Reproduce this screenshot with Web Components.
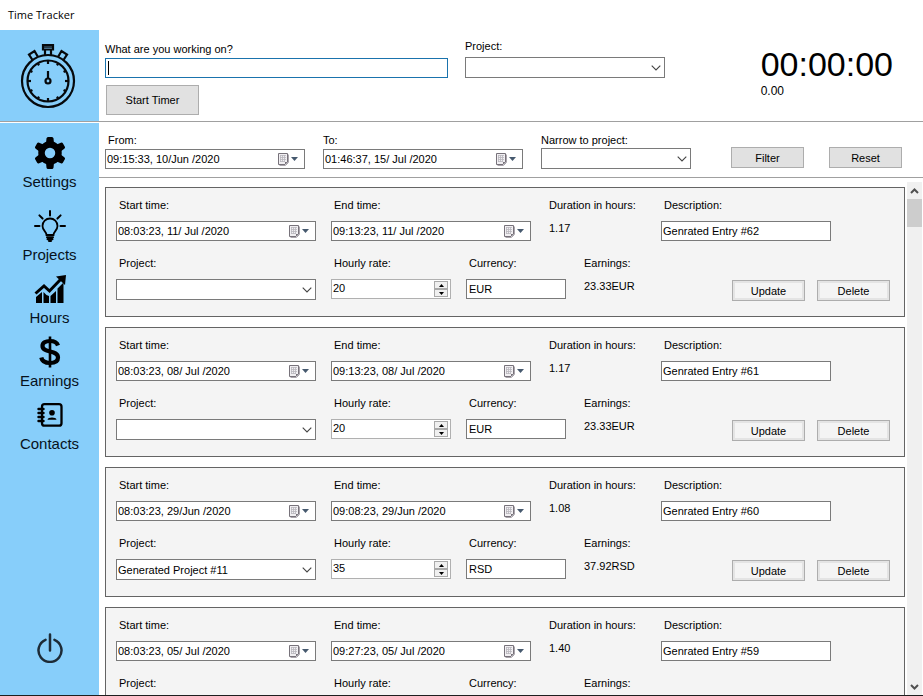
<!DOCTYPE html>
<html lang="en">
<head>
<meta charset="utf-8">
<title>Time Tracker</title>
<style>
  body { margin: 0; background: #fff; color: #000; font: 11px/14px "Liberation Sans", Arial, sans-serif; }
</style>
</head>
<body>
<tt-app></tt-app>

<script>
const define = (name, cls) => customElements.define(name, cls);

class Base extends HTMLElement {
  connectedCallback() {
    if (this.shadowRoot) return;
    const t = document.createElement('template');
    t.innerHTML = `<style>*{box-sizing:border-box}:host{display:block;box-sizing:border-box}${this.styles()}</style>${this.markup()}`;
    this.attachShadow({ mode: 'open' }).append(t.content.cloneNode(true));
  }
  attr(n, fallback = '') { return this.getAttribute(n) ?? fallback; }
  styles() { return ''; }
  markup() { return '<slot></slot>'; }
}

/* Labelled controls: the label and its control share one shadow root. */
class Field extends Base {
  styles() {
    return `
      :host { flex: none; }
      label, .label { display: block; padding-left: var(--label-inset, 3px); margin-bottom: var(--label-gap, 9px); white-space: nowrap; }
      input, select, button { font: inherit; color: inherit; margin: 0; border-radius: 0; outline: 0; }
      .box { display: grid; align-items: center; height: 20px; background: #fff; border: 1px solid #7a7a7a; }
      .box > * { grid-row: 1; }
      input, select { width: 100%; height: 18px; border: 0; background: transparent; padding: 0 1px; min-width: 0; appearance: none; }
      svg { display: block; pointer-events: none; }
      ${this.extra()}`;
  }
  extra() { return ''; }
  markup() { return `<label for="c">${this.attr('label')}</label>${this.control()}`; }
}

define('tt-text', class extends Field {
  extra() { return `
    .box > * { grid-column: 1; }
    input { padding-left: var(--text-inset, 1px); }
    :host([active]) .box { border-color: #1a73ad; }
    .caret { width: 1px; height: 14px; margin-left: 2px; background: #000; }`; }
  control() { return `<div class="box"><input id="c" type="text" value="${this.attr('value')}">${this.hasAttribute('active') ? '<i class="caret"></i>' : ''}</div>`; }
});

define('tt-select', class extends Field {
  extra() { return `
    .box { height: 21px; }
    .box > * { grid-column: 1; }
    svg { justify-self: end; margin-right: 3px; }`; }
  control() { return `<div class="box"><select id="c"><option>${this.attr('value')}</option></select>
    <svg width="10" height="6" viewBox="0 0 10 6" fill="none" stroke="#444" stroke-width="1.1"><path d="M.7.7 5 5 9.300.7"/></svg></div>`; }
});

define('tt-date', class extends Field {
  extra() { return `
    .box { grid-template-columns: 1fr 28px; }
    button { height: 18px; padding: 0 0 0 1px; border: 0; background: none; }`; }
  control() { return `<div class="box"><input id="c" type="text" value="${this.attr('value')}">
    <button aria-label="Open calendar for ${this.attr('label')}"><svg width="22" height="14" viewBox="0 0 22 14">
      <path d="M1.500 1.500h9v8.500l-2.500 2.500h-6.500z" fill="#f1eff2" stroke="#77727a"/>
      <path d="M11.500 2.500v8l-3 3h-6" fill="none" stroke="#aaa5ac"/>
      <path d="M3 3.500h6M3 5.500h6M3 7.500h6M3 9.500h5M3.500 3v7M5.500 3v7M7.500 3v7" stroke="#b9b6bd" stroke-width=".8"/>
      <path d="M8 12.500V10h2.500z" fill="#77727a"/>
      <path d="M14 5h7l-3.500 4z" fill="#46596e"/></svg></button></div>`; }
});

define('tt-spin', class extends Field {
  extra() { return `
    .box { grid-template-columns: 1fr 15px; border-color: #b0b0b0; padding-right: 1px; }
    input { appearance: textfield; height: 16px; align-self: start; }
    input::-webkit-inner-spin-button { appearance: none; }
    .arrows { display: grid; }
    button { display: grid; place-items: center; width: 14px; height: 8px; padding: 0; border: 1px solid #a9a9a9; background: #f0f0f0; }`; }
  control() { return `<div class="box"><input id="c" type="number" value="${this.attr('value')}">
    <div class="arrows"><button aria-label="Increase"><svg width="5" height="3" viewBox="0 0 5 3"><path d="M0 3h5L2.500 0z"/></svg></button>
    <button aria-label="Decrease"><svg width="5" height="3" viewBox="0 0 5 3"><path d="M0 0h5L2.500 3z"/></svg></button></div></div>`; }
});

define('tt-readout', class extends Field {
  extra() { return `output { display: block; padding-left: var(--label-inset, 3px); }`; }
  markup() { return `<div class="label">${this.attr('label')}</div><output>${this.attr('value')}</output>`; }
});

define('tt-button', class extends Base {
  styles() { return `
    :host { flex: none; }
    button { display: block; width: var(--w, 73px); height: var(--h, 21px); padding: 0; border: 1px solid #adadad; border-radius: 0; background: #e1e1e1; font: inherit; color: inherit; }
    :host([soft]) button { background: #f4f4f4; box-shadow: inset 0 0 0 2px #e4e4e4; }`; }
  markup() { return '<button type="button"><slot></slot></button>'; }
});

define('tt-entry', class extends Base {
  styles() { return `
    :host { flex: none; border: 1px solid #646464; background: #f4f4f4; padding: 10px 14px 15px 10px; }
    .row { display: flex; gap: 15px; align-items: flex-start; }
    .row + .row { margin-top: 15px; min-height: 45px; }
    .w200 { width: 200px; } .w170 { width: 170px; } .w120 { width: 120px; } .w100 { width: 100px; }
    .currency { --text-inset: 2px; }
    .actions { display: flex; gap: 12px; margin-left: auto; align-self: flex-end; }`; }
  markup() { const a = n => this.attr(n); return `
    <div class="row">
      <tt-date class="w200" label="Start time:" value="${a('start')}"></tt-date>
      <tt-date class="w200" label="End time:" value="${a('end')}"></tt-date>
      <tt-readout class="w100" label="Duration in hours:" value="${a('hours')}"></tt-readout>
      <tt-text class="w170" label="Description:" value="${a('description')}"></tt-text>
    </div>
    <div class="row">
      <tt-select class="w200" label="Project:" value="${a('project')}"></tt-select>
      <tt-spin class="w120" label="Hourly rate:" value="${a('rate')}"></tt-spin>
      <tt-text class="w100 currency" label="Currency:" value="${a('currency')}"></tt-text>
      <tt-readout label="Earnings:" value="${a('earnings')}"></tt-readout>
      <div class="actions"><tt-button soft>Update</tt-button><tt-button soft>Delete</tt-button></div>
    </div>`; }
});

define('tt-nav-item', class extends Base {
  styles() { return `
    button { display: grid; justify-items: center; gap: 4px; width: 100%; padding: 0; border: 0; background: none; color: #06121c; font: 15px/18px "Liberation Sans", Arial, sans-serif; }
    .icon { display: grid; place-items: center; height: 32px; }`; }
  markup() { return '<button type="button"><span class="icon"><slot name="icon"></slot></span><span><slot></slot></span></button>'; }
});

define('tt-logo', class extends Base {
  styles() { return `:host { display: grid; place-items: center; background: #87cefa; padding-right: 3px; } svg { display: block; }`; }
  markup() {
    let ticks = '';
    for (let i = 0; i < 12; i++) ticks += `<path d="M28 19v${i % 3 ? 2 : 3}" transform="rotate(${i * 30} 28 39)"/>`;
    return `<svg width="56" height="68" viewBox="0 0 56 68" fill="none" stroke="#06090c" stroke-width="2.200" role="img" aria-label="Stopwatch">
      <circle cx="28" cy="39" r="26"/><circle cx="28" cy="39" r="20.500"/>
      ${ticks}
      <path d="M28 29V36"/><circle cx="28" cy="39" r="2.500"/>
      <path d="M23 3h10v4.500H23zM25 7.500v5.500M31 7.500v5.500"/><path d="M23.500 5h9" stroke-width="1.500"/>
      <path d="M12.500 18 9 12.500l5.500-3.500 3.500 6M43.500 18 47 12.500 41.500 9 38 15"/></svg>`;
  }
});

define('tt-sidebar', class extends Base {
  styles() { return `
    :host { display: flex; flex-direction: column; background: #87cefa; padding: 14px 0 32px; }
    nav { display: grid; gap: 9px; }
    nav > :first-child { margin-bottom: 10px; }
    svg { display: block; }
    .power { margin: auto auto 0; padding: 0; border: 0; background: none; display: block; }`; }
  markup() {
    const teeth = [0, 60, 120, 180, 240, 300].map(a => `<path d="M12 6 12.500 1.500q.2-1.500 1.500-1.500h4q1.300 0 1.500 1.500L20 6z" transform="rotate(${a} 16 16)"/>`).join('');
    const rays = [-90, -45, 0, 45, 90].map(a => `<path d="M16 1v4.500" transform="rotate(${a} 16 16)"/>`).join('');
    return `<nav>
      <tt-nav-item>Settings<svg slot="icon" width="32" height="32" viewBox="0 0 32 32">${teeth}<circle cx="16" cy="16" r="8.500" fill="none" stroke="#000" stroke-width="6.500"/></svg></tt-nav-item>
      <tt-nav-item>Projects<svg slot="icon" width="32" height="32" viewBox="0 0 32 32" fill="none" stroke="#000" stroke-width="2" stroke-linecap="round">${rays}
        <path d="M12.500 25c0-3.500-4-4.500-4-9a7.500 7.500 0 0 1 15 0c0 4.500-4 5.500-4 9z" stroke-width="1.800"/><path d="M13 27.300h6M13.500 29.300h5M15 31h2" stroke-width="2"/></svg></tt-nav-item>
      <tt-nav-item>Hours<svg slot="icon" width="32" height="28" viewBox="0 0 32 28">
        <path d="M2 28v-6l6-5v11zM9.500 28V17l3 3 2.500 1v7zM16.500 28v-7l5.500-5v12zM23.500 28V13.500l6-6V28z"/>
        <path d="M1.500 18.500 10 11l5.500 5L27 4" fill="none" stroke="#000" stroke-width="3"/><path d="M22 1.500 32 0l-1 10z"/></svg></tt-nav-item>
      <tt-nav-item>Earnings<svg slot="icon" width="22" height="32" viewBox="0 0 22 32" fill="none" stroke="#000">
        <path d="M19 9.500C18 6.500 15 5 11 5c-4.500 0-7.500 1.900-7.500 5 0 7.500 15.500 3.500 15.500 11.500C19 25 16 27 11 27c-5 0-8-2-8.700-5.500" stroke-width="4.200"/><path d="M11 .5v31" stroke-width="2.600"/></svg></tt-nav-item>
      <tt-nav-item>Contacts<svg slot="icon" width="26" height="26" viewBox="0 0 26 26" fill="none" stroke="#000" stroke-width="2.300">
        <rect x="5" y="2.200" width="19.500" height="21.500" rx="2.500"/><path d="M1.500 7h5M1.500 11h5M1.500 15h5M1.500 19h5" stroke-linecap="round" stroke-width="2.400"/>
        <circle cx="15" cy="10.800" r="2.800" fill="#000" stroke="none"/><path d="M10.500 17.800c0-3 9-3 9 0z" fill="#000" stroke="none"/></svg></tt-nav-item>
    </nav>
    <button class="power" aria-label="Exit"><svg width="26" height="30" viewBox="0 0 26 30" fill="none" stroke="#1d2b36" stroke-width="2.500" stroke-linecap="round"><path d="M13 1.500v16M8.500 6.800a11.500 11.500 0 1 0 9 0"/></svg></button>`;
  }
});

define('tt-tracker', class extends Base {
  styles() { return `
    :host { display: flex; padding: 0 30px 6px 6px; }
    .task { width: 343px; padding-top: 12px; --label-inset: 0px; --label-gap: 2px; }
    .task tt-button { --w: 93px; --h: 30px; margin: 7px 0 0 1px; }
    .project { width: 200px; margin-left: 17px; padding-top: 9px; --label-inset: 0px; --label-gap: 4px; }
    .clock { margin-left: auto; padding-top: 14px; }
    .time { font-size: 34px; line-height: 40px; }
    .money { font-size: 12px; line-height: 14px; }`; }
  markup() { return `
    <div class="task"><tt-text active label="What are you working on?"></tt-text><tt-button>Start Timer</tt-button></div>
    <tt-select class="project" label="Project:"></tt-select>
    <div class="clock"><div class="time">00:00:00</div><div class="money">0.00</div></div>`; }
});

define('tt-filter', class extends Base {
  styles() { return `
    :host { display: flex; align-items: flex-end; gap: 18px; padding: 10px 21px 8px 6px; border-bottom: 1px solid #a0a0a0; --label-gap: 2px; }
    tt-date { width: 200px; }
    tt-select { width: 150px; --label-inset: 0px; --label-gap: 1px; }
    .to { --label-inset: 0px; }
    .actions { display: flex; gap: 25px; margin: 0 0 1px auto; }`; }
  markup() { return `
    <tt-date label="From:" value="09:15:33, 10/Jun /2020"></tt-date>
    <tt-date class="to" label="To:" value="01:46:37, 15/ Jul /2020"></tt-date>
    <tt-select label="Narrow to project:"></tt-select>
    <div class="actions"><tt-button>Filter</tt-button><tt-button>Reset</tt-button></div>`; }
});

define('tt-scrollbar', class extends Base {
  styles() { return `
    :host { display: grid; grid-template-rows: 17px 1fr 17px; width: 15px; background: #f0f0f0; }
    button { display: grid; place-items: center; padding: 0; border: 0; background: none; }
    .thumb { height: 28px; background: #cdcdcd; }`; }
  markup() {
    const arrow = d => `<svg width="9" height="6" viewBox="0 0 9 6" fill="none" stroke="#505050" stroke-width="2"><path d="${d}"/></svg>`;
    return `<button aria-label="Scroll up">${arrow('M1 5 4.500 1.500 8 5')}</button><div><div class="thumb"></div></div><button aria-label="Scroll down">${arrow('M1 1 4.500 4.500 8 1')}</button>`;
  }
});

define('tt-app', class extends Base {
  styles() { return `
    :host { display: grid; grid-template: auto auto minmax(0, 1fr) / 99px minmax(0, 1fr); height: 100vh; border-bottom: 1px solid #1e1e1e; overflow: hidden; }
    h1 { grid-column: 1 / -1; margin: 0; padding: 0 8px; font: 11px/30px "Open Sans", "Noto Sans", sans-serif; }
    .top { grid-column: 1 / -1; display: grid; grid-template-columns: subgrid; border-bottom: 1px solid #a0a0a0; margin-bottom: 1px; }
    main { display: flex; flex-direction: column; min-height: 0; }
    .view { flex: 1; display: flex; min-height: 0; padding-right: 1px; }
    .list { flex: 1; display: flex; flex-direction: column; gap: 10px; padding: 9px 2px 0 6px; overflow: hidden; }
    tt-scrollbar { margin-top: 4px; }`; }
  markup() {
    const rows = [
      ['08:03:23, 11/ Jul /2020', '09:13:23, 11/ Jul /2020', '1.17', 62, '', 20, 'EUR', '23.33EUR'],
      ['08:03:23, 08/ Jul /2020', '09:13:23, 08/ Jul /2020', '1.17', 61, '', 20, 'EUR', '23.33EUR'],
      ['08:03:23, 29/Jun /2020', '09:08:23, 29/Jun /2020', '1.08', 60, 'Generated Project #11', 35, 'RSD', '37.92RSD'],
      ['08:03:23, 05/ Jul /2020', '09:27:23, 05/ Jul /2020', '1.40', 59, '', 20, 'EUR', '28.00EUR']
    ];
    return `<h1>Time Tracker</h1>
      <div class="top"><tt-logo></tt-logo><tt-tracker></tt-tracker></div>
      <tt-sidebar></tt-sidebar>
      <main><tt-filter></tt-filter>
        <div class="view"><div class="list">${rows.map(r => `<tt-entry start="${r[0]}" end="${r[1]}" hours="${r[2]}" description="Genrated Entry #${r[3]}" project="${r[4]}" rate="${r[5]}" currency="${r[6]}" earnings="${r[7]}"></tt-entry>`).join('')}</div>
        <tt-scrollbar></tt-scrollbar></div></main>`;
  }
});
</script>
</body>
</html>
